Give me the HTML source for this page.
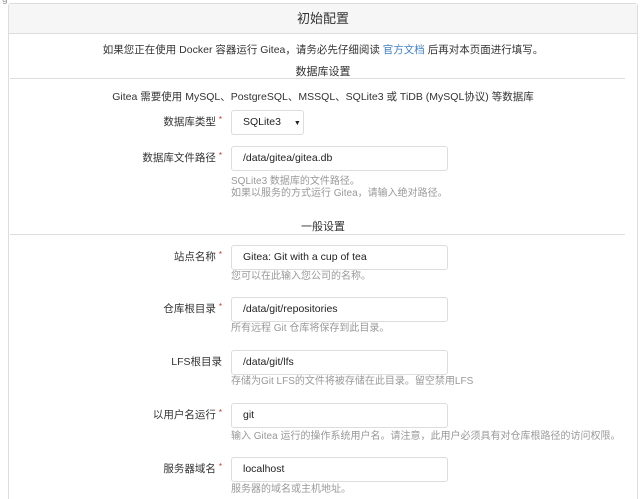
<!DOCTYPE html>
<html><head><meta charset="utf-8"><style>
html,body{margin:0;width:640px;height:499px;overflow:hidden}
body{background:#fff;font-family:"Liberation Sans","Noto Sans CJK SC",sans-serif;font-size:10.5px;color:#333;position:relative}
.a{position:absolute}
.box{left:8px;top:3px;width:630px;height:496px;border:1px solid #ddd;border-bottom:none;border-radius:3px 3px 0 0;box-sizing:border-box}
.hdr{left:9px;top:4px;width:628px;height:29px;background:#f6f6f6;border-bottom:1px solid #ddd;text-align:center;line-height:29px;font-size:13px;color:#333}
.c{left:8px;width:630px;text-align:center}
.hr{left:10px;width:615px;height:1px;background:#ddd}
.lbl{width:222px;left:0;text-align:right;line-height:25px}
.lbl i{color:#db2828;font-style:normal;font-size:8px;vertical-align:top;margin-left:3px;line-height:20px}
.in{left:231px;width:204px;height:23px;border:1px solid #ddd;border-radius:3px;padding-left:11px;line-height:23px;font-size:10.5px;color:#222}
.hp{left:231px;color:#999;font-size:10px;line-height:12px}
</style></head><body>
<div class="a" style="left:2px;top:-6px;color:#999;font-size:10px">g</div>
<div class="a box"></div>
<div class="a hdr">初始配置</div>
<div class="a c" style="top:42px">如果您正在使用 Docker 容器运行 Gitea，请务必先仔细阅读 <span style="color:#4183c4">官方文档</span> 后再对本页面进行填写。</div>
<div class="a c" style="top:63px;font-size:11px">数据库设置</div>
<div class="a hr" style="top:78px"></div>
<div class="a c" style="top:89px">Gitea 需要使用 MySQL、PostgreSQL、MSSQL、SQLite3 或 TiDB (MySQL协议) 等数据库</div>
<div class="a lbl" style="top:110px">数据库类型<i>*</i></div>
<div class="a in" style="top:110px;width:60px">SQLite3 <span style="font-size:7px;margin-left:10px">▼</span></div>
<div class="a lbl" style="top:146px">数据库文件路径<i>*</i></div>
<div class="a in" style="top:146px">/data/gitea/gitea.db</div>
<div class="a hp" style="top:176px">SQLite3 数据库的文件路径。<br>如果以服务的方式运行 Gitea，请输入绝对路径。</div>
<div class="a c" style="top:218px;font-size:11px">一般设置</div>
<div class="a hr" style="top:234px"></div>
<div class="a lbl" style="top:245px">站点名称<i>*</i></div>
<div class="a in" style="top:245px">Gitea: Git with a cup of tea</div>
<div class="a hp" style="top:271px">您可以在此输入您公司的名称。</div>
<div class="a lbl" style="top:297px">仓库根目录<i>*</i></div>
<div class="a in" style="top:297px">/data/git/repositories</div>
<div class="a hp" style="top:323px">所有远程 Git 仓库将保存到此目录。</div>
<div class="a lbl" style="top:350px">LFS根目录</div>
<div class="a in" style="top:350px">/data/git/lfs</div>
<div class="a hp" style="top:376px">存储为Git LFS的文件将被存储在此目录。留空禁用LFS</div>
<div class="a lbl" style="top:403px">以用户名运行<i>*</i></div>
<div class="a in" style="top:403px">git</div>
<div class="a hp" style="top:431px">输入 Gitea 运行的操作系统用户名。请注意，此用户必须具有对仓库根路径的访问权限。</div>
<div class="a lbl" style="top:457px">服务器域名<i>*</i></div>
<div class="a in" style="top:457px">localhost</div>
<div class="a hp" style="top:484px">服务器的域名或主机地址。</div>
</body></html>
